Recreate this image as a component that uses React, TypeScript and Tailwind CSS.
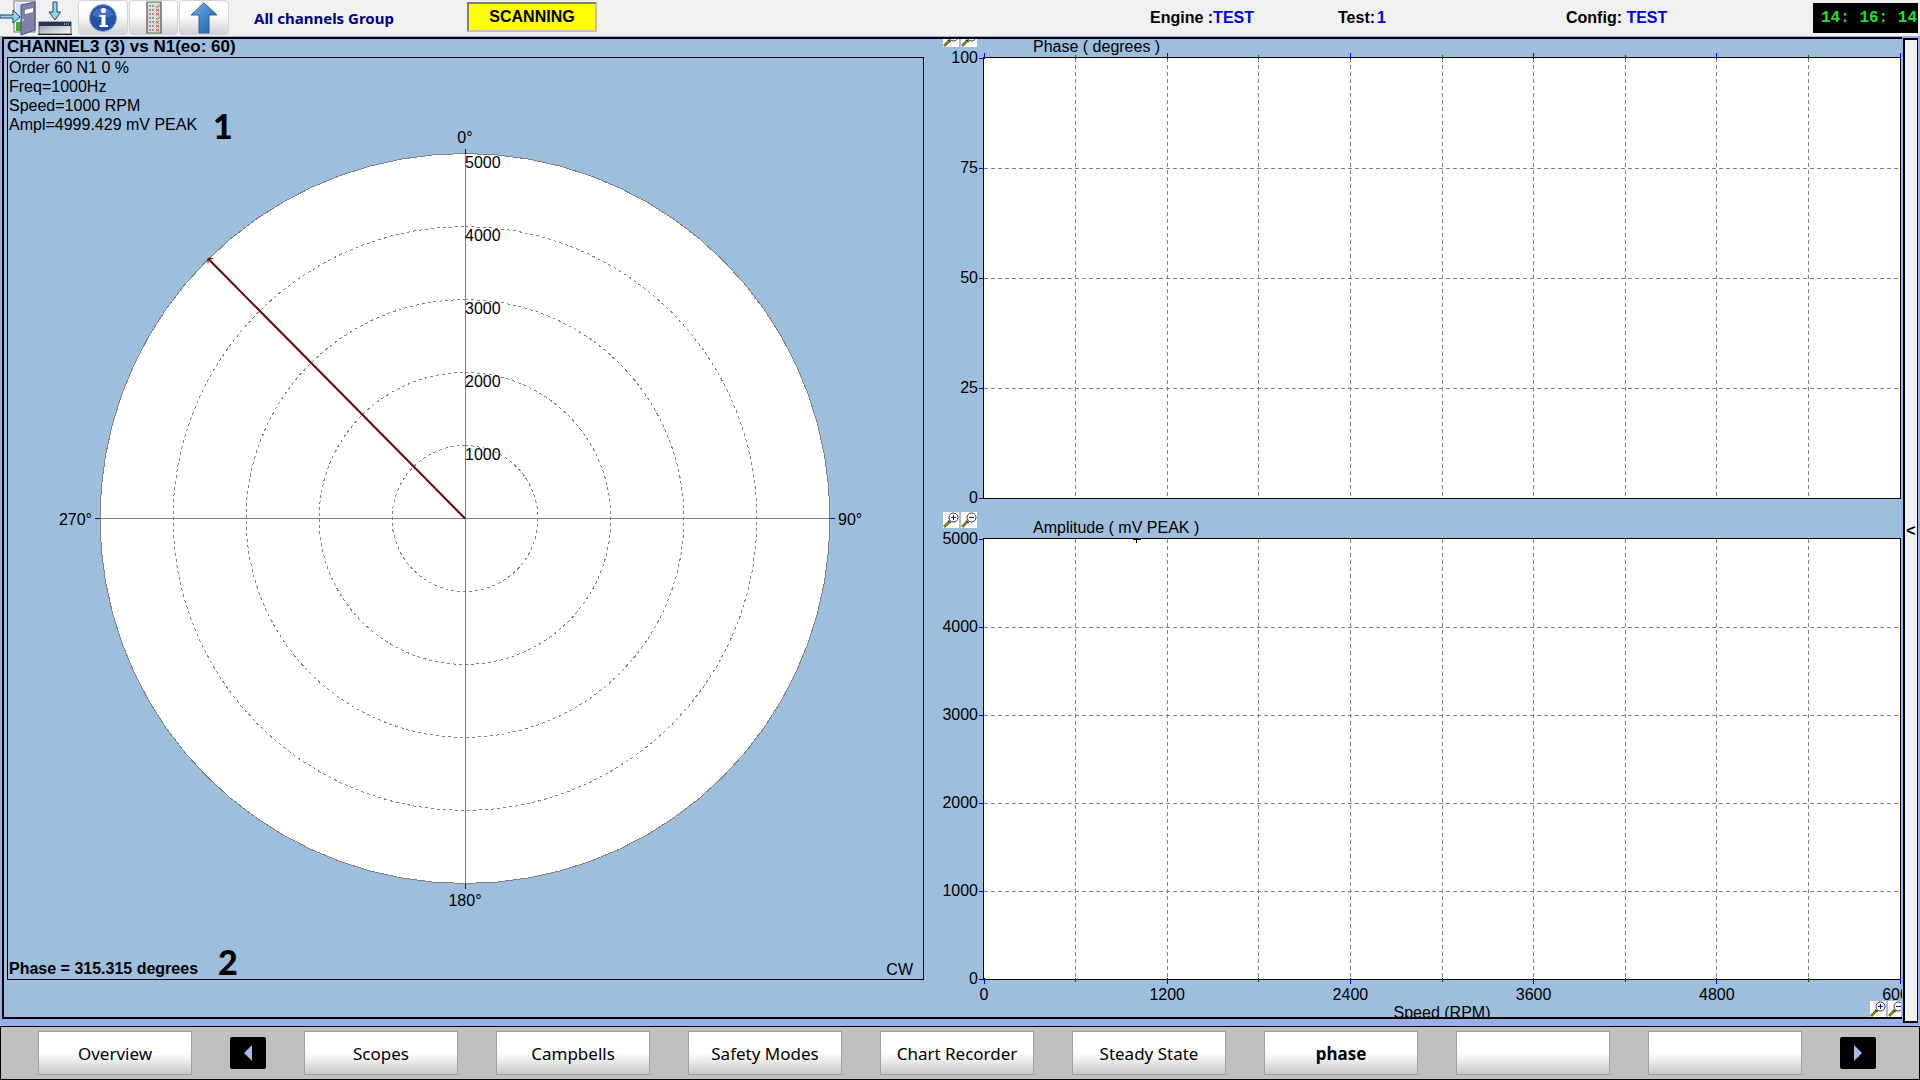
import React, { useState } from "react";

const CX = 457;
const CY = 460;
const R = 365;

const rings = [1000, 2000, 3000, 4000, 5000];
const tabs = ["Scopes", "Campbells", "Safety Modes", "Chart Recorder", "Steady State", "phase", "", ""];

// the scope draws its circles in steps of 5 degrees
function circlePoints(r: number) {
  const pts: string[] = [];
  for (let a = 0; a < 360; a += 5) {
    const rad = (a * Math.PI) / 180;
    pts.push(`${CX + r * Math.sin(rad)},${CY - r * Math.cos(rad)}`);
  }
  return pts.join(" ");
}

const ExitIcon = () => (
  <svg width="36" height="36" viewBox="0 0 36 36">
    <rect x="14" y="1" width="21" height="31" fill="#f7f7fb" stroke="#777" />
    <rect x="16" y="3" width="8" height="19" fill="#cfe4f5" />
    <rect x="16" y="22" width="8" height="9" fill="#3fae2a" />
    <path d="M21 5 L35 2 V30 L21 35 Z" fill="#7f80ab" stroke="#4d4e78" />
    <path d="M25 10 L33 8 V12 L25 14 Z" fill="#fff" />
    <circle cx="23" cy="20" r="1" fill="#ddd" />
    <path d="M0 15 H13 V10 L20 17 L13 23 V18 H0 Z" fill="#8fd3f2" stroke="#23455e" />
  </svg>
);

const MinimizeIcon = () => (
  <svg width="35" height="36" viewBox="0 0 35 36">
    <defs>
      <linearGradient id="tray" x1="0" y1="0" x2="1" y2="1">
        <stop offset="0" stopColor="#8c93a0" />
        <stop offset="1" stopColor="#fff" />
      </linearGradient>
    </defs>
    <path d="M15 2 H19 V12 H22.500 L17 20 L11 12 H15 Z" fill="#8fd3f2" stroke="#23455e" />
    <rect x="1" y="22" width="32" height="12" fill="url(#tray)" stroke="#555" />
    <rect x="1" y="22" width="32" height="4" fill="#27364f" />
    <path d="M26 24 H27 M28 24 H29 M30 24 H31" stroke="#cde" />
    <path d="M0 34.500 H34" stroke="#222" />
  </svg>
);

const InfoIcon = () => (
  <svg width="30" height="30" viewBox="0 0 30 30">
    <circle cx="15" cy="15" r="13.500" fill="#2352a8" stroke="#8aa3cf" />
    <path d="M4 12 A12 12 0 0 1 26 12 Q15 17 4 12" fill="#3f70c4" />
    <circle cx="15.500" cy="7.500" r="2.600" fill="#fff" />
    <path d="M11.500 12 H17.500 V22 H20 V24 H11.500 V22 H13.500 V14 H11.500 Z" fill="#fff" />
  </svg>
);

const ListIcon = () => (
  <svg width="16" height="34" viewBox="0 0 16 34">
    <rect x="1" y="1" width="14" height="31" fill="#dcdcdc" stroke="#3d7a48" strokeWidth="1" />
    <path d="M1 1 V32 M15 1 V32" stroke="#8d5a8d" />
    {[5, 9, 13, 17, 21, 25, 29].map((y, i) => (
      <g key={y}>
        <path d={`M3 ${y} H9`} stroke="#555" strokeDasharray="2 1" />
        {i === 0 || i === 3 ? (
          <path d={`M10 ${y} l1.500 1.500 l2.500 -3`} stroke="#2a9a3c" fill="none" />
        ) : (
          <path d={`M10 ${y - 1} l3 2.500 m0 -2.500 l-3 2.500`} stroke="#d9534f" fill="none" />
        )}
      </g>
    ))}
  </svg>
);

const UpIcon = () => (
  <svg width="30" height="34" viewBox="0 0 30 34">
    <defs>
      <linearGradient id="up" x1="0" y1="0" x2="1" y2="1">
        <stop offset="0" stopColor="#6fb0ea" />
        <stop offset="1" stopColor="#1d5ba8" />
      </linearGradient>
    </defs>
    <path d="M15 2 L28 14 H20 V32 H10 V14 H2 Z" fill="url(#up)" stroke="#2a5f9f" />
    <path d="M10 5 L14 1 L17 4" fill="none" stroke="#c583c9" strokeDasharray="1 1" />
  </svg>
);

function ZoomButton({ minus = false, label }) {
  return (
    <button type="button" aria-label={label} className="w-4 h-4 shrink-0 bg-white">
      <svg width="16" height="16" viewBox="0 0 16 16">
        <path d="M1 15 L7 9" stroke="#8a7a1c" strokeWidth="3" />
        <path d="M5 9 L8 11" stroke="#222" />
        <circle cx="10.500" cy="5.500" r="4.500" fill="#fff" stroke="#333" />
        <path d={minus ? "M8 5.500 H13" : "M8 5.500 H13 M10.500 3 V8"} stroke="#10109a" />
      </svg>
    </button>
  );
}

function ZoomPair({ axis }) {
  return (
    <>
      <ZoomButton label={`Zoom in ${axis}`} />
      <ZoomButton minus label={`Zoom out ${axis}`} />
    </>
  );
}

function PolarPlot() {
  const rad = (315.315 * Math.PI) / 180;
  const nx = Math.round(CX + R * Math.sin(rad));
  const ny = Math.round(CY - R * Math.cos(rad));
  return (
    <svg viewBox="0 0 915 920" className="[grid-area:1/1] w-full h-full min-h-0">
      <polygon points={circlePoints(R)} fill="#fff" stroke="#808080" shapeRendering="crispEdges" />
      {rings.slice(0, 4).map((v) => (
        <polygon
          key={v}
          points={circlePoints((R * v) / 5000)}
          fill="none"
          stroke="#808080"
          strokeDasharray="3 3"
          shapeRendering="crispEdges"
        />
      ))}
      <g shapeRendering="crispEdges">
        <path d={`M${CX} ${CY - R} V${CY + R} M${CX - R} ${CY} H${CX + R}`} stroke="#808080" />
        <path
          d={`M${CX} ${CY - R - 5} v5 M${CX} ${CY + R} v5 M${CX - R - 5} ${CY} h5 M${CX + R} ${CY} h5`}
          stroke="#0000ff"
        />
      </g>
      <path d={`M${CX} ${CY} L${nx} ${ny}`} stroke="#6e0000" strokeWidth="2" />
      <path d={`M${nx} ${ny + 5} V${ny} H${nx + 5}`} stroke="#6e0000" strokeWidth="1" fill="none" />
      {rings.map((v) => (
        <text key={v} x={CX} y={CY - (R * v) / 5000 + 14}>
          {v}
        </text>
      ))}
      <text x={CX} y="84" textAnchor="middle">0°</text>
      <text x={CX} y="847" textAnchor="middle">180°</text>
      <text x="830" y="466">90°</text>
      <text x="84" y="466" textAnchor="end">270°</text>
    </svg>
  );
}

function XyPlot({ name, ticks, topTicks = false, xLabels = [], point = false }) {
  const cols = [0, 1, 2, 3, 4, 5, 6, 7, 8, 9, 10];
  const max = ticks[ticks.length - 1];
  return (
    <div className="flex-1 min-h-0 ml-[59px] bg-white border border-black">
      <svg role="img" aria-label={name} className="block w-full h-full overflow-visible">
        <g shapeRendering="crispEdges">
          {cols.slice(1, 10).map((c) => (
            <line key={c} x1={`${c * 10}%`} x2={`${c * 10}%`} y1="0" y2="100%" stroke="#808080" strokeDasharray="4 3" />
          ))}
          {ticks.slice(1, -1).map((t) => {
            const y = `${100 - (t / max) * 100}%`;
            return <line key={t} x1="0" x2="100%" y1={y} y2={y} stroke="#808080" strokeDasharray="4 3" />;
          })}
          {cols.map((c) => {
            const even = c % 2 === 0;
            const x = `${c * 10}%`;
            return topTicks ? (
              <line key={c} x1={x} x2={x} y1={even ? -5 : -3} y2="1" stroke={even ? "#0000ff" : "#006400"} />
            ) : (
              <svg key={c} y="100%" className="overflow-visible">
                <line x1={x} x2={x} y1="-1" y2={even ? 5 : 3} stroke={even ? "#0000ff" : "#006400"} />
              </svg>
            );
          })}
        </g>
        {ticks.map((t) => {
          const y = `${100 - (t / max) * 100}%`;
          return (
            <g key={t}>
              <line x1="-5" x2="0" y1={y} y2={y} stroke="#0000ff" shapeRendering="crispEdges" />
              <text x="-6" y={y} dy="5" textAnchor="end">
                {t}
              </text>
            </g>
          );
        })}
        {xLabels.map((t) => (
          <text key={t} x={`${(t / 6000) * 100}%`} y="100%" dy="21" textAnchor="middle">
            {t}
          </text>
        ))}
        {point && (
          <svg x="16.67%" y="0" className="overflow-visible">
            <path d="M-4 0 H4 M0 0 V4" stroke="#000" shapeRendering="crispEdges" />
          </svg>
        )}
      </svg>
    </div>
  );
}

const toolBtn =
  "h-full flex-1 max-w-[50px] flex items-center justify-center rounded-sm border border-[#d4d4d4] bg-linear-to-b from-white from-40% to-[#d2d2d2]";

const App = () => {
  const [active, setActive] = useState("phase");

  return (
    <div className="h-screen flex flex-col overflow-hidden bg-[#9aaee6] text-black font-['Liberation_Sans',Arial,sans-serif] text-[16px] leading-[19px]">
      <header className="h-9 shrink-0 grid grid-cols-[254fr_213fr_130fr_553fr_188fr_228fr_247fr_105fr] items-center bg-[#f0f0f0] pr-0.5 font-bold">
        <div className="h-9 flex items-center gap-px pb-px">
          <button type="button" aria-label="Exit" className="w-9 shrink-0">
            <ExitIcon />
          </button>
          <button type="button" aria-label="Minimize" className="w-10 shrink-0 pl-px">
            <MinimizeIcon />
          </button>
          <button type="button" aria-label="Info" className={toolBtn}>
            <InfoIcon />
          </button>
          <button type="button" aria-label="Channel list" className={toolBtn}>
            <ListIcon />
          </button>
          <button type="button" aria-label="Up" className={toolBtn}>
            <UpIcon />
          </button>
          <div className="w-6 shrink-0" />
        </div>
        <div className="font-['Noto_Sans',sans-serif] text-[15px] text-[#000080] whitespace-nowrap">All channels Group</div>
        <div className="h-[30px] mb-0.5 pb-0.5 flex items-center justify-center bg-[#ffff00] border-2 border-[#808080] border-r-[#c0c0c0] border-b-[#c0c0c0]">
          SCANNING
        </div>
        <div />
        <div className="whitespace-nowrap pb-0.5">
          Engine :<span className="text-[#0000e0]">TEST</span>
        </div>
        <div className="whitespace-nowrap pb-0.5">
          Test:<span className="text-[#0000e0] ml-0.5">1</span>
        </div>
        <div className="whitespace-nowrap pb-0.5">
          Config: <span className="text-[#0000e0]">TEST</span>
        </div>
        <time className="h-[30px] bg-black text-[#22e022] flex items-center justify-end pr-px whitespace-pre font-['Liberation_Mono',monospace] font-bold">
          14: 16: 14
        </time>
      </header>

      <main className="flex-1 min-h-0 flex pt-px pl-0.5 pr-0.5">
        <div className="flex-1 min-w-0 mb-[7px] flex bg-[#9ebedd] border-2 border-r-0 border-black pl-[3px] overflow-hidden">
          <section className="flex-1 min-w-0 flex flex-col pb-[37px]">
            <h1 className="h-[18px] shrink-0 font-bold leading-[16px] text-[17px]">CHANNEL3 (3) vs N1(eo: 60)</h1>
            <div className="flex-1 min-h-0 grid grid-cols-1 grid-rows-1 border border-black">
              <PolarPlot />
              <div className="[grid-area:1/1] self-start justify-self-start flex items-end gap-4 pl-px">
                <div>
                  <p>Order 60 N1 0 %</p>
                  <p>Freq=1000Hz</p>
                  <p>Speed=1000 RPM</p>
                  <p>Ampl=4999.429 mV PEAK</p>
                </div>
                <span className="font-['Lato',sans-serif] font-black text-[34px] leading-[16px]">1</span>
              </div>
              <div className="[grid-area:1/1] self-end justify-self-start flex items-end gap-5 pl-px">
                <p className="font-bold pb-px">Phase = 315.315 degrees</p>
                <span className="font-['Lato',sans-serif] font-black text-[34px] leading-[34px]">2</span>
              </div>
              <p className="[grid-area:1/1] self-end justify-self-end pr-2.5">CW</p>
            </div>
          </section>

          <section className="flex-1 basis-[61px] min-w-0 flex flex-col pr-px">
            <div className="h-[18px] shrink-0 flex">
              <div className="w-[109px] h-2 shrink-0 flex items-end gap-0.5 pl-[19px] overflow-hidden">
                <ZoomPair axis="phase" />
              </div>
              <h2 className="leading-[16px]">Phase ( degrees )</h2>
            </div>
            <XyPlot name="Phase" ticks={[0, 25, 50, 75, 100]} topTicks />
            <div className="h-[39px] shrink-0 flex items-start">
              <div className="w-[109px] shrink-0 flex gap-0.5 pl-[19px] pt-[13px]">
                <ZoomPair axis="amplitude" />
              </div>
              <h2 className="pt-[19px]">Amplitude ( mV PEAK )</h2>
            </div>
            <XyPlot
              name="Amplitude"
              ticks={[0, 1000, 2000, 3000, 4000, 5000]}
              xLabels={[0, 1200, 2400, 3600, 4800, 6000]}
              point
            />
            <div className="h-[37px] shrink-0 flex items-end ml-[59px] overflow-hidden">
              <p className="flex-1 h-[14px] text-center">Speed (RPM)</p>
              <div className="w-0 flex justify-end">
                <div className="flex gap-0.5 shrink-0 -mr-[3px]">
                  <ZoomPair axis="speed" />
                </div>
              </div>
            </div>
          </section>
        </div>
        <div className="w-px shrink-0" />
        <button
          type="button"
          aria-label="Open side panel"
          className="w-[15px] shrink-0 mt-px mb-[3px] bg-[#f0f0f0] border-2 border-r border-black flex items-center justify-center font-bold"
        >
          &lt;
        </button>
      </main>

      <footer className="h-[54px] shrink-0 flex items-center gap-[38px] pl-[37px] pr-[43px] bg-[#c0c0c0] border border-black font-['Noto_Sans',sans-serif] text-[17px]">
        <button type="button" className="flex-1 h-11 border border-[#a0a0a0] bg-linear-to-b from-white from-50% to-[#c8c8c8]">
          Overview
        </button>
        <button type="button" aria-label="Previous tabs" className="w-9 h-8 shrink-0 rounded-xs bg-black flex items-center justify-center">
          <svg width="8" height="16" viewBox="0 0 8 16">
            <path d="M8 0 L0 8 L8 16 Z" fill="#a9b8e4" />
          </svg>
        </button>
        {tabs.map((tab, i) => (
          <button
            key={i}
            type="button"
            onClick={() => tab && setActive(tab)}
            className={`flex-1 min-w-0 h-11 whitespace-nowrap border border-[#a0a0a0] bg-linear-to-b from-white from-50% to-[#c8c8c8] ${
              tab === active ? "font-bold" : ""
            }`}
          >
            {tab}
          </button>
        ))}
        <button type="button" aria-label="Next tabs" className="w-9 h-8 shrink-0 rounded-xs bg-black flex items-center justify-center">
          <svg width="8" height="16" viewBox="0 0 8 16">
            <path d="M0 0 L8 8 L0 16 Z" fill="#a9b8e4" />
          </svg>
        </button>
      </footer>
    </div>
  );
};

export default App;
